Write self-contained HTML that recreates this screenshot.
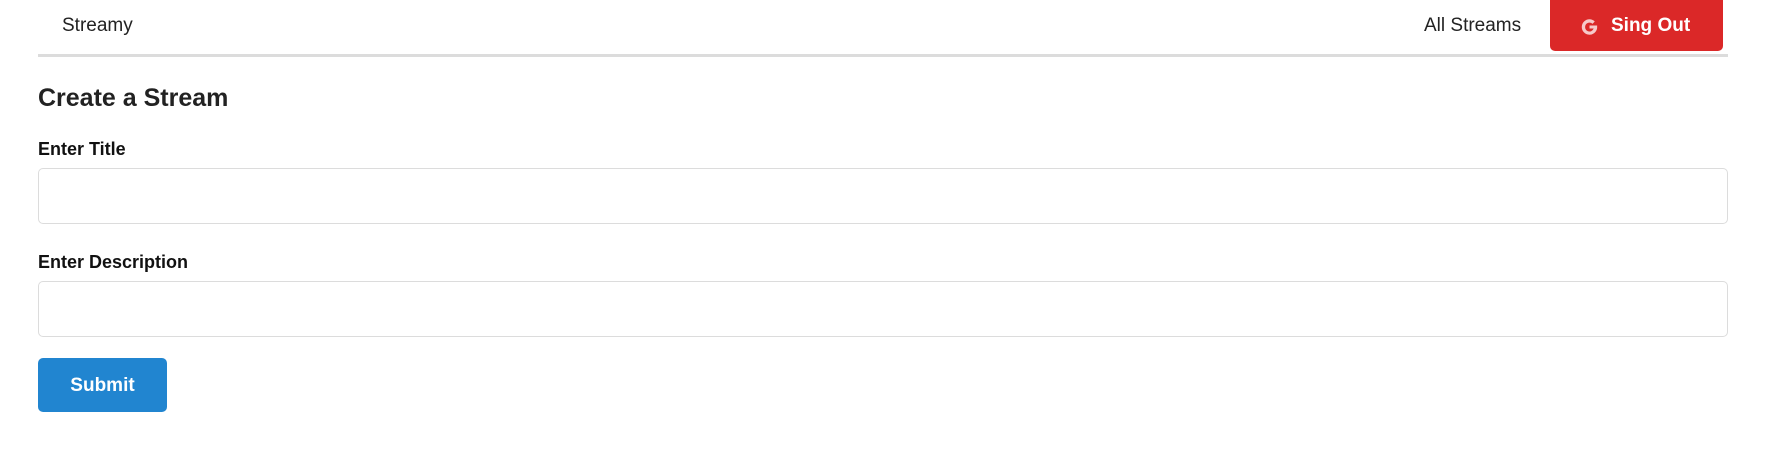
<!DOCTYPE html>
<html><head><style>
body{margin:0;width:1790px;height:470px;background:#fff;font-family:"Liberation Sans",sans-serif;color:#222;position:relative;overflow:hidden}
.a{position:absolute;white-space:nowrap}
.inp{position:absolute;left:38px;width:1688px;height:54px;border:1px solid #dcdcdc;border-radius:5px}
</style></head><body>
<div class="a" style="left:62px;top:14px;font-size:19px;line-height:24px">Streamy</div>
<div class="a" style="left:1424px;top:14px;font-size:19px;line-height:24px">All Streams</div>
<div class="a" style="left:1550px;top:0;width:173px;height:51px;background:#db2828;border-radius:0 0 5px 5px"></div>
<svg class="a" style="left:1579px;top:17px" width="21" height="20" viewBox="0 0 22 22"><path d="M11 2.5a8.5 8.5 0 1 0 8.4 9.8V9.3H11v3.4h4.6a4.9 4.9 0 1 1-1.3-5.2l2.5-2.5A8.5 8.5 0 0 0 11 2.5z" fill="#f6c9c9"/></svg>
<div class="a" style="left:1611px;top:14px;font-size:19px;line-height:24px;font-weight:bold;color:#fff">Sing Out</div>
<div class="a" style="left:38px;top:54px;width:1690px;height:3px;background:#dcdcdc"></div>
<div class="a" style="left:38px;top:83px;font-size:25px;line-height:30px;font-weight:bold;color:#222">Create a Stream</div>
<div class="a" style="left:38px;top:137px;font-size:18px;line-height:24px;font-weight:bold;color:#111">Enter Title</div>
<div class="inp" style="top:168px"></div>
<div class="a" style="left:38px;top:250px;font-size:18px;line-height:24px;font-weight:bold;color:#111">Enter Description</div>
<div class="inp" style="top:281px"></div>
<div class="a" style="left:38px;top:358px;width:129px;height:54px;background:#2185d0;border-radius:5px;color:#fff;font-weight:bold;font-size:19px;line-height:56px;text-align:center">Submit</div>
</body></html>
